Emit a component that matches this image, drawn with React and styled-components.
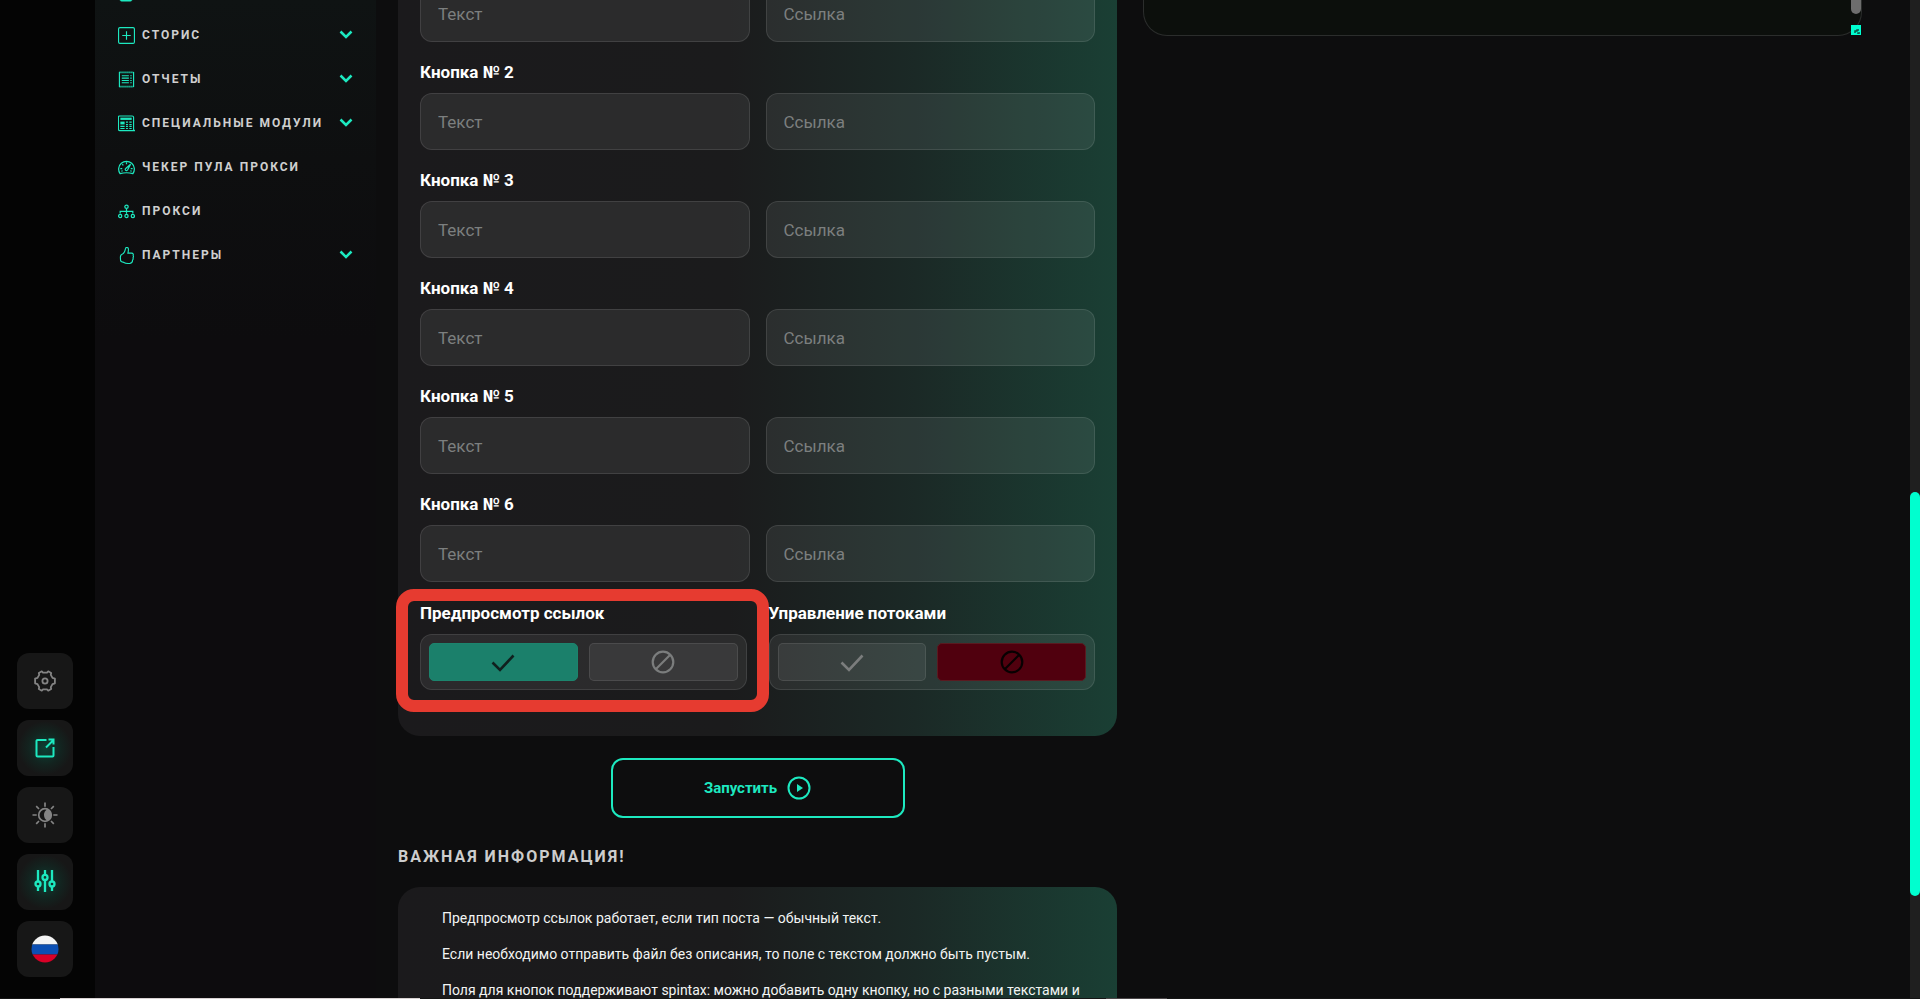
import React from "react";
import styled, { createGlobalStyle, css } from "styled-components";

const Global = createGlobalStyle`
  * { box-sizing: border-box; }
  html, body { margin: 0; background: #0d0d0e; }
  body { overflow: hidden; }
  body, button, input { font-family: Roboto, "Noto Sans", "Liberation Sans", sans-serif; }
  h2, p, ul { margin: 0; padding: 0; }
`;

const ACCENT = "#1de9c0";

const Page = styled.div`
  position: relative;
  display: flex;
  height: 100vh;
  overflow: hidden;
  background: #0d0d0e;
`;

const Rail = styled.aside`
  flex: 0 0 95px;
  display: flex;
  flex-direction: column;
  justify-content: flex-end;
  align-items: center;
  gap: 11px;
  padding: 0 5px 22px 0;
  background: #040404;
`;

const RailButton = styled.button`
  display: grid;
  place-items: center;
  width: 56px;
  height: 56px;
  padding: 0;
  border: 0;
  border-radius: 12px;
  color: ${(p) => (p.$active ? ACCENT : "#848484")};
  background: ${(p) =>
    p.$active ? "radial-gradient(circle, #0d4034 0, #13231f 42%, #171717 68%)" : "#171717"};
`;

const Sidebar = styled.nav`
  flex: 0 0 281px;
  overflow: hidden;
  background: linear-gradient(180deg, #0f1313 0, #0e0f10 160px, #0d0c0e 340px);
`;

const Menu = styled.ul`
  display: flex;
  flex-direction: column;
  margin-top: -31px;
  list-style: none;
`;

const MenuLink = styled.a`
  display: flex;
  align-items: center;
  gap: 7px;
  height: 44px;
  padding: 0 23px;
  color: #cfcfcf;
  font-size: 12px;
  font-weight: 700;
  letter-spacing: 2px;
  text-decoration: none;
  white-space: nowrap;
  svg { flex: none; color: ${ACCENT}; }
`;

const MenuText = styled.span`
  flex: 1;
`;

const Content = styled.main`
  flex: 1;
  min-width: 0;
  display: grid;
  grid-template-columns: minmax(0, 1fr) minmax(0, 1fr);
  align-items: start;
  gap: 26px;
  padding: 0 48px 0 22px;
`;

const FormColumn = styled.div`
  display: flex;
  flex-direction: column;
`;

const cardFill = css`
  background: linear-gradient(90deg, #1b1a1c 0, #1b1b1c 46%, #1b2926 72%, #1a3f34 100%);
`;

const FormCard = styled.form`
  ${cardFill}
  margin-top: -15px;
  padding: 0 22px 46px;
  border-radius: 0 0 22px 22px;
`;

const Label = styled.div`
  margin: 18px 0 9px;
  color: #fff;
  font-size: 17px;
  line-height: 24px;
  font-weight: 700;
  white-space: nowrap;
`;

const FieldRow = styled.div`
  display: flex;
  gap: 16px;
`;

const TextField = styled.input`
  flex: 1;
  min-width: 0;
  height: 57px;
  padding: 0 17px;
  border: 1px solid rgba(255, 255, 255, 0.1);
  border-radius: 12px;
  outline: 0;
  color: #fff;
  background: rgba(255, 255, 255, 0.075);
  font-size: 17px;
  &::placeholder { color: #7c7f7f; opacity: 1; }
`;

const ToggleRow = styled.div`
  display: flex;
  gap: 22px;
  padding-top: 1px;
`;

const ToggleGroup = styled.div`
  position: relative;
  flex: 1;
`;

const ToggleBox = styled.div`
  display: flex;
  gap: 11px;
  height: 56px;
  padding: 8px;
  border: 1px solid rgba(255, 255, 255, 0.1);
  border-radius: 12px;
  background: rgba(255, 255, 255, 0.07);
`;

const tones = {
  off: css`
    color: #7b7d7d;
    border-color: rgba(255, 255, 255, 0.09);
    background: rgba(255, 255, 255, 0.07);
  `,
  yes: css`
    color: #10201e;
    border-color: #1c846d;
    background: #1b806b;
  `,
  no: css`
    color: #080002;
    border-color: #5a1a20;
    background: #50000e;
  `,
};

const Option = styled.label`
  position: relative;
  flex: 1;
  display: grid;
  place-items: center;
  border: 1px solid;
  border-radius: 5px;
  ${(p) => tones[p.$tone]}
  input { position: absolute; inset: 0; width: 100%; height: 100%; margin: 0; opacity: 0; }
`;

const Highlight = styled.div`
  position: absolute;
  inset: 6px -22px -22px -24px;
  border: 12px solid #e63b30;
  border-radius: 18px;
  pointer-events: none;
`;

const LaunchButton = styled.button`
  align-self: center;
  display: flex;
  align-items: center;
  justify-content: center;
  gap: 10px;
  width: 294px;
  height: 60px;
  margin-top: 22px;
  border: 2px solid ${ACCENT};
  border-radius: 12px;
  color: ${ACCENT};
  background: transparent;
  font-size: 15px;
  font-weight: 700;
`;

const Heading = styled.h2`
  margin: 27px 0 18px;
  color: #cdcdcd;
  font-size: 16px;
  line-height: 24px;
  font-weight: 700;
  letter-spacing: 2px;
`;

const InfoCard = styled.section`
  ${cardFill}
  display: flex;
  flex-direction: column;
  gap: 16px;
  padding: 21px 22px 40px 44px;
  border-radius: 22px;
`;

const InfoText = styled.p`
  color: #f2f4f3;
  font-size: 14px;
  line-height: 20px;
  white-space: nowrap;
`;

const SidePanel = styled.section`
  display: flex;
  flex-direction: column;
  align-items: flex-end;
  gap: 11px;
  height: 36px;
  border: 1px solid #2b2d2c;
  border-top: 0;
  border-radius: 0 0 24px 24px;
  background: #0c0f0c;
`;

const PanelThumb = styled.div`
  width: 10px;
  height: 14px;
  border-radius: 0 0 5px 5px;
  background: #6d6d6d;
`;

const ResizeGrip = styled.svg`
  display: block;
  background: #00ffd0;
`;

const PageScroll = styled.div`
  flex: 0 0 10px;
  padding-top: 492px;
  background: #1f1f1f;
`;

const PageThumb = styled.div`
  height: 404px;
  border-radius: 5px;
  background: #00ffcf;
`;

const BottomEdge = styled.div`
  position: absolute;
  left: 0;
  right: 0;
  bottom: 0;
  display: flex;
  justify-content: space-between;
  height: 1px;
  padding: 0 753px 0 60px;
  background: #151515;
`;

const EdgeMark = styled.span`
  width: ${(p) => p.$size}px;
  background: ${(p) => p.$tint};
`;

const Line = ({ size = 17, box = 18, width = 1, children }) => (
  <svg width={size} height={size} viewBox={`0 0 ${box} ${box}`} fill="none" stroke="currentColor" strokeWidth={width} aria-hidden="true">
    {children}
  </svg>
);

const icons = {
  doc: <Line size={21} box={21}><rect x="2" y="3" width="12" height="17" rx="1.500" /><path d="M3 19.500h10" /></Line>,
  plus: <Line width={1.2}><rect x=".6" y=".6" width="16.800" height="16.800" rx="1.500" /><path d="M9 4.500v9M4.500 9h9" /></Line>,
  report: (
    <Line width={1.2}>
      <path d="M1.500 1v16M16.500 1v16" />
      <path d="M1.500 1.500h15M1.500 16.500h15" strokeWidth="2" strokeDasharray="1.300 .8" />
      <path d="M4 5h7.500M4 7.500h7.500M4 10h7.500M4 12.500h7.500M13 5h1.500M13 7.500h1.500M13 10h1.500M13 12.500h1.500" />
    </Line>
  ),
  modules: (
    <Line width={1.2}>
      <path d="M1.500 1h13.500a1.500 1.500 0 0 1 1.500 1.500v13l1 1H2a1.500 1.500 0 0 1-1.500-1.500V2a1 1 0 0 1 1-1z" />
      <path d="M2.500 4h12" strokeWidth="2.400" />
      <path d="M2.500 8.500h4.500" strokeWidth="3" />
      <path d="M8.500 7.500h2M12 7.500h2.500M8.500 10h2M12 10h2.500M2.500 12h4.500M8.500 12h2M12 12h2.500M2.500 14.300h4.500M8.500 14.300h2M12 14.300h2.500" />
    </Line>
  ),
  gauge: (
    <Line width={1.3}>
      <path d="M2.200 15.500A8.300 8.300 0 1 1 15.800 15.500C11.500 14.300 6.500 14.300 2.200 15.500z" />
      <path d="M9 3.500v2M4.500 5.500l1.200 1.200M2.500 10.200h2M13.500 10.200h2M3.500 13l1.500-.6M14.500 13l-1.500-.6" />
      <path d="M13.300 5.500 8.200 10a1.300 1.300 0 1 0 1.900 1.700z" />
    </Line>
  ),
  network: (
    <Line width={1.3}>
      <circle cx="9" cy="4" r="1.800" />
      <circle cx="2.300" cy="13.800" r="1.700" />
      <circle cx="9" cy="13.800" r="1.700" />
      <circle cx="15.700" cy="13.800" r="1.700" />
      <path d="M9 6v5.500M2.300 11V8.800h13.400V11" />
    </Line>
  ),
  thumb: (
    <Line width={1.2}>
      <path d="M2.500 10.500c0-1.800 1-2.500 2.300-3C7 6.500 7.500 4 8 1.500c.2-1.400 2.800-1.400 3 .5.200 1.500-.2 3-.5 4.500h3.800c1.900 0 2.200 1.500 1.700 2.500.5.800.4 1.800-.1 2.500.3.800.1 1.700-.5 2.300.1 2-.8 3.200-2.700 3.500-2.500.3-4.800 0-6.500-1-2.200-.3-3.500-.8-3.500-2.300z" />
    </Line>
  ),
};

const Chevron = () => (
  <svg width="14" height="10" viewBox="0 0 14 10" fill="none" stroke="currentColor" strokeWidth="2.500" aria-hidden="true">
    <path d="M1.500 1.500 7 7l5.500-5.500" />
  </svg>
);

const Gear = () => (
  <Line size={24} box={24} width={1.8}>
    <path d="M8.800 2.300 10 3.600h4l1.200-1.300 3 1.700-.4 1.900 1.700 3 2.400.8v4.600l-2.400.8-1.700 3 .4 1.900-3 1.700-1.200-1.300h-4l-1.200 1.300-3-1.700.4-1.900-1.700-3-2.400-.8V9.700l2.400-.8 1.700-3L5.800 4z" strokeLinejoin="round" />
    <circle cx="12" cy="12" r="2.600" />
  </Line>
);

const OpenOut = () => (
  <Line size={20} box={20} width={2}>
    <path d="M11.500 2H2.500A1 1 0 0 0 1.500 3v14.500a1 1 0 0 0 1 1h15a1 1 0 0 0 1-1V9M11 9.500l7-7M13.500 1.500h5v5" />
  </Line>
);

const Sun = () => (
  <Line size={26} box={26} width={1.7}>
    <circle cx="13" cy="13" r="6.300" />
    <path d="M15 7.500a5.600 5.600 0 0 1 0 11a6.500 6.500 0 0 1 0-11z" fill="currentColor" stroke="none" />
    <path d="M13 .5v4.200M13 21.300v4.200M.500 13h4.200M21.300 13h4.200M4.200 4.200l2.800 2.800M19 19l2.800 2.800M21.800 4.200 19 7M7 19l-2.800 2.800" />
  </Line>
);

const Sliders = () => (
  <Line size={24} box={24} width={2.3}>
    <path d="M5 0v11.300M5 16.500V21M12 0v4.800M12 10v12M19 0v11.300M19 16.500V21" />
    <circle cx="5" cy="14" r="2.500" />
    <circle cx="12" cy="7.400" r="2.500" />
    <circle cx="19" cy="14" r="2.500" />
  </Line>
);

const Flag = () => (
  <svg width="28" height="28" viewBox="0 0 28 28" aria-hidden="true">
    <defs><clipPath id="flag-disc"><circle cx="14" cy="14" r="13.500" /></clipPath></defs>
    <g clipPath="url(#flag-disc)">
      <path fill="#f4f4f4" d="M0 0h28v9.500H0z" />
      <path fill="#0b4fb3" d="M0 9.500h28v10H0z" />
      <path fill="#d80027" d="M0 19.500h28v9H0z" />
    </g>
  </svg>
);

const Check = () => (
  <Line size={24} box={24} width={2.6}><path d="M1.500 12.500 9 20 22.500 5.500" /></Line>
);

const Ban = () => (
  <Line size={24} box={24} width={2.2}><circle cx="12" cy="12" r="10.300" /><path d="M5 19 19 5" /></Line>
);

const Play = () => (
  <Line size={24} box={24} width={2}>
    <circle cx="12" cy="12" r="10.500" />
    <path d="M10 8v8l6-4z" fill="currentColor" stroke="none" />
  </Line>
);

const menu = [
  { text: "", icon: "doc" },
  { text: "СТОРИС", icon: "plus", open: true },
  { text: "ОТЧЕТЫ", icon: "report", open: true },
  { text: "СПЕЦИАЛЬНЫЕ МОДУЛИ", icon: "modules", open: true },
  { text: "ЧЕКЕР ПУЛА ПРОКСИ", icon: "gauge" },
  { text: "ПРОКСИ", icon: "network" },
  { text: "ПАРТНЕРЫ", icon: "thumb", open: true },
];

const tools = [
  { name: "settings", icon: <Gear /> },
  { name: "open", icon: <OpenOut />, active: true },
  { name: "theme", icon: <Sun /> },
  { name: "filters", icon: <Sliders />, active: true },
  { name: "language", icon: <Flag /> },
];

const Toggle = ({ id, title, on, marked }) => (
  <ToggleGroup role="radiogroup" aria-labelledby={id}>
    <Label id={id}>{title}</Label>
    <ToggleBox>
      <Option $tone={on ? "yes" : "off"}>
        <input type="radio" name={id} defaultChecked={on} aria-label="yes" />
        <Check />
      </Option>
      <Option $tone={on ? "off" : "no"}>
        <input type="radio" name={id} defaultChecked={!on} aria-label="no" />
        <Ban />
      </Option>
    </ToggleBox>
    {marked && <Highlight />}
  </ToggleGroup>
);

const Fields = ({ n }) => (
  <>
    {n > 1 && <Label id={`button-${n}`}>Кнопка № {n}</Label>}
    <FieldRow role="group" aria-labelledby={n > 1 ? `button-${n}` : undefined}>
      <TextField type="text" placeholder="Текст" aria-label="Текст" />
      <TextField type="text" placeholder="Ссылка" aria-label="Ссылка" />
    </FieldRow>
  </>
);

export default function App() {
  return (
    <>
      <Global />
      <Page>
        <Rail>
          {tools.map((t) => (
            <RailButton key={t.name} type="button" aria-label={t.name} $active={t.active}>{t.icon}</RailButton>
          ))}
        </Rail>
        <Sidebar>
          <Menu>
            {menu.map((m) => (
              <li key={m.icon}>
                <MenuLink href="#">
                  {icons[m.icon]}
                  <MenuText>{m.text}</MenuText>
                  {m.open && <Chevron />}
                </MenuLink>
              </li>
            ))}
          </Menu>
        </Sidebar>
        <Content>
          <FormColumn>
            <FormCard>
              {[1, 2, 3, 4, 5, 6].map((n) => <Fields key={n} n={n} />)}
              <ToggleRow>
                <Toggle id="preview" title="Предпросмотр ссылок" on marked />
                <Toggle id="threads" title="Управление потоками" />
              </ToggleRow>
            </FormCard>
            <LaunchButton type="button">Запустить <Play /></LaunchButton>
            <Heading>ВАЖНАЯ ИНФОРМАЦИЯ!</Heading>
            <InfoCard>
              <InfoText>Предпросмотр ссылок работает, если тип поста — обычный текст.</InfoText>
              <InfoText>Если необходимо отправить файл без описания, то поле с текстом должно быть пустым.</InfoText>
              <InfoText>Поля для кнопок поддерживают spintax: можно добавить одну кнопку, но с разными текстами и</InfoText>
            </InfoCard>
          </FormColumn>
          <SidePanel>
            <PanelThumb />
            <ResizeGrip width="10" height="10" viewBox="0 0 10 10" aria-hidden="true">
              <path d="M4 8V6h2V5h2M7 9V8h2" fill="none" stroke="#0b5546" strokeWidth="1.500" />
            </ResizeGrip>
          </SidePanel>
        </Content>
        <PageScroll><PageThumb /></PageScroll>
        <BottomEdge>
          <EdgeMark $size={360} $tint="#d8d2d2" />
          <EdgeMark $size={61} $tint="#4a4648" />
        </BottomEdge>
      </Page>
    </>
  );
}
